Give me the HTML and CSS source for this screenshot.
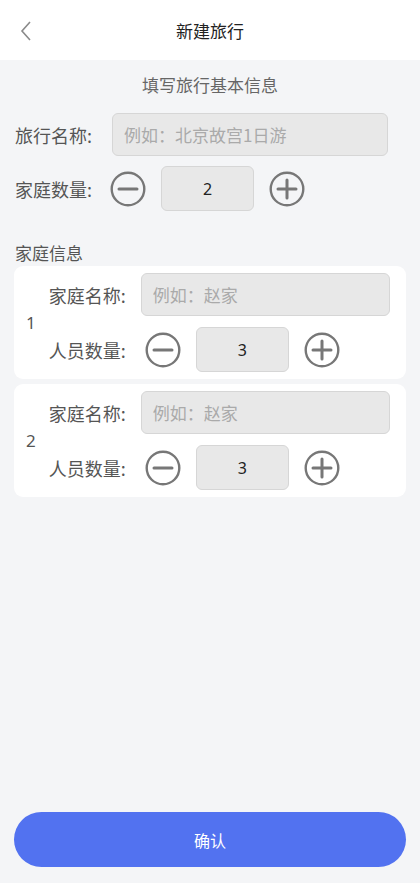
FILE: index.html
```html
<!DOCTYPE html>
<html lang="zh-CN">
<head>
    <meta charset="UTF-8">
    <meta name="viewport" content="width=device-width, initial-scale=1.0">
    <title>新建旅行</title>
    <link rel="stylesheet" href="styles.css">
</head>
<body>
    <header class="top-bar">
        <svg class="back" width="14" height="22" viewBox="0 0 14 22">
            <path d="M11 2 L3 11 L11 20" fill="none" stroke="#8a8a8a" stroke-width="1.6"/>
        </svg>
        <h1>新建旅行</h1>
    </header>

    <main class="content">
        <p class="subtitle">填写旅行基本信息</p>

        <div class="row">
            <label class="label">旅行名称:</label>
            <input class="text-input main-input" placeholder="例如：北京故宫1日游">
        </div>

        <div class="row row-count">
            <label class="label">家庭数量:</label>
            <div class="stepper">
                <svg class="step-btn" width="36" height="36" viewBox="0 0 36 36">
                    <circle cx="18" cy="18" r="16.3" fill="none" stroke="#777" stroke-width="2.4"/>
                    <path d="M9 18 H27" stroke="#777" stroke-width="3" stroke-linecap="round"/>
                </svg>
                <div class="count-box">2</div>
                <svg class="step-btn" width="36" height="36" viewBox="0 0 36 36">
                    <circle cx="18" cy="18" r="16.3" fill="none" stroke="#777" stroke-width="2.4"/>
                    <path d="M9 18 H27 M18 9 V27" stroke="#777" stroke-width="3" stroke-linecap="round"/>
                </svg>
            </div>
        </div>

        <h2 class="section-title">家庭信息</h2>

        <div class="family-card">
            <span class="family-no">1</span>
            <div class="family-fields">
                <div class="row">
                    <label class="label card-label">家庭名称:</label>
                    <input class="text-input" placeholder="例如：赵家">
                </div>
                <div class="row">
                    <label class="label card-label">人员数量:</label>
                    <div class="stepper card-stepper">
                        <svg class="step-btn" width="36" height="36" viewBox="0 0 36 36">
                            <circle cx="18" cy="18" r="16.3" fill="none" stroke="#777" stroke-width="2.4"/>
                            <path d="M9 18 H27" stroke="#777" stroke-width="3" stroke-linecap="round"/>
                        </svg>
                        <div class="count-box">3</div>
                        <svg class="step-btn" width="36" height="36" viewBox="0 0 36 36">
                            <circle cx="18" cy="18" r="16.3" fill="none" stroke="#777" stroke-width="2.4"/>
                            <path d="M9 18 H27 M18 9 V27" stroke="#777" stroke-width="3" stroke-linecap="round"/>
                        </svg>
                    </div>
                </div>
            </div>
        </div>

        <div class="family-card">
            <span class="family-no">2</span>
            <div class="family-fields">
                <div class="row">
                    <label class="label card-label">家庭名称:</label>
                    <input class="text-input" placeholder="例如：赵家">
                </div>
                <div class="row">
                    <label class="label card-label">人员数量:</label>
                    <div class="stepper card-stepper">
                        <svg class="step-btn" width="36" height="36" viewBox="0 0 36 36">
                            <circle cx="18" cy="18" r="16.3" fill="none" stroke="#777" stroke-width="2.4"/>
                            <path d="M9 18 H27" stroke="#777" stroke-width="3" stroke-linecap="round"/>
                        </svg>
                        <div class="count-box">3</div>
                        <svg class="step-btn" width="36" height="36" viewBox="0 0 36 36">
                            <circle cx="18" cy="18" r="16.3" fill="none" stroke="#777" stroke-width="2.4"/>
                            <path d="M9 18 H27 M18 9 V27" stroke="#777" stroke-width="3" stroke-linecap="round"/>
                        </svg>
                    </div>
                </div>
            </div>
        </div>

        <button class="confirm">确认</button>
    </main>
</body>
</html>
```

FILE: styles.css
```css
* {
    box-sizing: border-box;
}

body {
    margin: 0;
    min-height: 100vh;
    display: flex;
    flex-direction: column;
    background-color: #f4f5f7;
    font-family: "Noto Sans CJK SC", "Noto Sans", sans-serif;
    color: #555;
}

.top-bar {
    height: 60px;
    background-color: #fff;
    display: flex;
    align-items: center;
    justify-content: center;
    position: relative;
}

.top-bar h1 {
    margin: 0;
    font-size: 17px;
    font-weight: normal;
    color: #222;
}

.back {
    position: absolute;
    left: 19px;
    top: 20px;
}

.content {
    flex: 1;
    display: flex;
    flex-direction: column;
    padding: 0 14px 16px;
}

.subtitle {
    margin: 12px 0 0;
    height: 26px;
    line-height: 26px;
    text-align: center;
    font-size: 17px;
    color: #666;
}

.row {
    display: flex;
    align-items: center;
}

.content > .row:first-of-type {
    margin-top: 15px;
}

.row-count {
    margin-top: 10px;
}

.label {
    width: 98px;
    flex-shrink: 0;
    padding-left: 1px;
    font-size: 18px;
    color: #555;
}

.text-input {
    flex: 1;
    min-width: 0;
    height: 43px;
    padding: 0 11px;
    border: 1px solid #d6d6d6;
    border-radius: 6px;
    background-color: #e8e8e8;
    font-family: inherit;
    font-size: 17px;
    color: #333;
}

.text-input::placeholder {
    color: #aaa;
}

.main-input {
    margin-right: 18px;
}

.stepper {
    display: flex;
    align-items: center;
    gap: 15px;
    margin-left: -2px;
}

.step-btn {
    display: block;
}

.count-box {
    width: 93px;
    height: 45px;
    line-height: 45px;
    text-align: center;
    border: 1px solid #d6d6d6;
    border-radius: 6px;
    background-color: #e8e8e8;
    font-family: "Noto Sans", sans-serif;
    font-size: 16px;
    color: #222;
}

.section-title {
    margin: 30px 0 0;
    padding-left: 1px;
    height: 24px;
    line-height: 24px;
    font-size: 17px;
    font-weight: normal;
    color: #555;
}

.family-card {
    display: flex;
    align-items: center;
    margin-top: 5px;
    padding: 7px 16px 7px 12px;
    border-radius: 9px;
    background-color: #fff;
}

.section-title + .family-card {
    margin-top: 1px;
}

.family-no {
    margin-right: 13px;
    font-family: "Noto Sans", sans-serif;
    font-size: 17px;
    color: #555;
}

.family-fields {
    flex: 1;
    display: flex;
    flex-direction: column;
    gap: 11px;
}

.card-label {
    width: 92px;
    padding-left: 0;
}

.card-stepper {
    margin-left: 4px;
}

.confirm {
    margin-top: auto;
    height: 55px;
    border: none;
    border-radius: 28px;
    background-color: #5272f0;
    color: #fff;
    font-family: inherit;
    font-size: 16px;
}
```
